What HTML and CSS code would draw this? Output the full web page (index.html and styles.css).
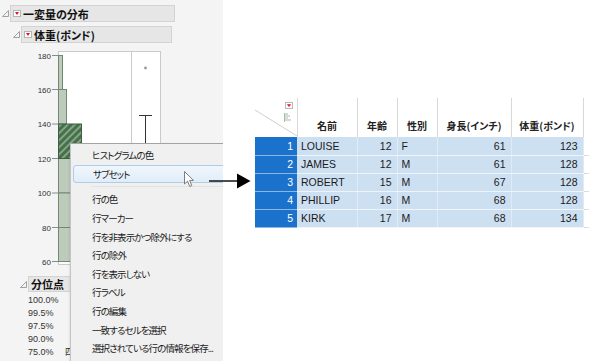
FILE: index.html
```html
<!DOCTYPE html>
<html lang="ja">
<head>
    <meta charset="UTF-8">
    <title>一変量の分布 - サブセット</title>
    <link rel="stylesheet" href="styles.css">
</head>
<body>

<div class="report">
    <div class="outline level1">
        <svg class="disclose" width="7" height="7" viewBox="0 0 7 7"><polygon points="6.5,0.5 6.5,6.5 0.5,6.5"/></svg>
        <div class="outline-title title-dist"><span class="hotspot"></span>一変量の分布</div>
    </div>
    <div class="outline level2">
        <svg class="disclose" width="7" height="7" viewBox="0 0 7 7"><polygon points="6.5,0.5 6.5,6.5 0.5,6.5"/></svg>
        <div class="outline-title title-var"><span class="hotspot"></span>体重(ポンド)</div>
    </div>

    <svg class="plot" width="223" height="231" viewBox="0 43 223 231">
        <defs>
            <pattern id="hatch" width="5" height="5" patternUnits="userSpaceOnUse" patternTransform="rotate(45)">
                <rect width="5" height="5" fill="#46704a"/>
                <rect width="2" height="5" fill="#85a486"/>
            </pattern>
        </defs>
        <rect x="58.5" y="51.5" width="102" height="213" fill="#fff" stroke="#cacaca"/>
        <line x1="131.5" y1="51.5" x2="131.5" y2="264.5" stroke="#cacaca"/>

        <g class="bars">
            <rect x="58.5" y="55.5" width="4" height="34"/>
            <rect x="58.5" y="89.5" width="8" height="34.5"/>
            <rect x="58.5" y="158.5" width="36" height="34.5"/>
            <rect x="58.5" y="193" width="30" height="34.5"/>
            <rect x="58.5" y="227.5" width="22" height="34"/>
        </g>
        <rect x="58.5" y="124" width="23" height="34.5" fill="url(#hatch)" stroke="#3d5f40"/>

        <g class="ticks">
            <line x1="52" y1="55.5" x2="58" y2="55.5"/>
            <line x1="52" y1="89.5" x2="58" y2="89.5"/>
            <line x1="52" y1="124" x2="58" y2="124"/>
            <line x1="52" y1="158.5" x2="58" y2="158.5"/>
            <line x1="52" y1="193" x2="58" y2="193"/>
            <line x1="52" y1="227.5" x2="58" y2="227.5"/>
            <line x1="52" y1="261.5" x2="58" y2="261.5"/>
        </g>
        <g class="axis-labels">
            <text x="51" y="58.5">180</text>
            <text x="51" y="92.5">160</text>
            <text x="51" y="127">140</text>
            <text x="51" y="161.5">120</text>
            <text x="51" y="196">100</text>
            <text x="51" y="230.5">80</text>
            <text x="51" y="264.5">60</text>
        </g>

        <circle cx="145.5" cy="68" r="1.4" fill="#9a9a9a"/>
        <line x1="139" y1="115.5" x2="152" y2="115.5" stroke="#333"/>
        <line x1="145.5" y1="115.5" x2="145.5" y2="170" stroke="#333"/>
    </svg>

    <div class="outline level-quant">
        <svg class="disclose" width="7" height="7" viewBox="0 0 7 7"><polygon points="6.5,0.5 6.5,6.5 0.5,6.5"/></svg>
        <div class="outline-title title-quant">分位点</div>
    </div>
    <div class="quantiles">
        <div class="q-row"><span class="q-pct">100.0%</span></div>
        <div class="q-row"><span class="q-pct">99.5%</span></div>
        <div class="q-row"><span class="q-pct">97.5%</span></div>
        <div class="q-row"><span class="q-pct">90.0%</span></div>
        <div class="q-row"><span class="q-pct">75.0%</span><span class="q-name">四分位点</span></div>
    </div>

    <div class="menu">
        <div class="menu-item">ヒストグラムの色</div>
        <div class="menu-item active">サブセット</div>
        <div class="menu-sep"></div>
        <div class="menu-item">行の色</div>
        <div class="menu-item">行マーカー</div>
        <div class="menu-item">行を非表示かつ除外にする</div>
        <div class="menu-item">行の除外</div>
        <div class="menu-item">行を表示しない</div>
        <div class="menu-item">行ラベル</div>
        <div class="menu-item">行の編集</div>
        <div class="menu-item">一致するセルを選択</div>
        <div class="menu-item">選択されている行の情報を保存...</div>
    </div>

    <svg class="cursor" width="11" height="17" viewBox="0 0 11 17">
        <polygon points="0.5,0.5 0.5,13 3.5,10.2 5.8,15.5 7.8,14.6 5.6,9.4 9.5,9.4" fill="#fff" stroke="#7d7d7d"/>
    </svg>
</div>

<svg class="pointer-arrow" width="42" height="16" viewBox="0 0 42 16">
    <line x1="0" y1="8" x2="29" y2="8" stroke="#000" stroke-width="1.4"/>
    <polygon points="28,0.5 41.5,8 28,15.5" fill="#000"/>
</svg>

<div class="table-area">
    <table class="data-grid">
        <colgroup>
            <col class="c-row">
            <col class="c-name">
            <col class="c-age">
            <col class="c-sex">
            <col class="c-height">
            <col class="c-weight">
            <col class="c-next">
        </colgroup>
        <thead>
            <tr>
                <th class="corner">
                    <svg width="42" height="38" viewBox="0 0 42 38">
                        <line x1="0" y1="12" x2="42" y2="38" stroke="#cfcfcf"/>
                        <rect x="30.5" y="4.5" width="7" height="6" fill="#fff" stroke="#b8b8b8"/>
                        <polygon points="31.8,6.3 36.2,6.3 34,9" fill="#e2142b"/>
                        <g stroke="#a7bba7">
                            <line x1="29.5" y1="15" x2="29.5" y2="24"/>
                            <line x1="30" y1="16" x2="33" y2="16"/>
                            <line x1="30" y1="18" x2="35" y2="18"/>
                            <line x1="30" y1="20" x2="33" y2="20"/>
                            <line x1="30" y1="22" x2="36" y2="22"/>
                        </g>
                    </svg>
                </th>
                <th>名前</th>
                <th>年齢</th>
                <th>性別</th>
                <th>身長(インチ)</th>
                <th>体重(ポンド)</th>
                <th class="next"></th>
            </tr>
        </thead>
        <tbody>
            <tr><td class="rownum">1</td><td class="txt">LOUISE</td><td class="num">12</td><td class="txt">F</td><td class="num">61</td><td class="num">123</td><td class="next"></td></tr>
            <tr><td class="rownum">2</td><td class="txt">JAMES</td><td class="num">12</td><td class="txt">M</td><td class="num">61</td><td class="num">128</td><td class="next"></td></tr>
            <tr><td class="rownum">3</td><td class="txt">ROBERT</td><td class="num">15</td><td class="txt">M</td><td class="num">67</td><td class="num">128</td><td class="next"></td></tr>
            <tr><td class="rownum">4</td><td class="txt">PHILLIP</td><td class="num">16</td><td class="txt">M</td><td class="num">68</td><td class="num">128</td><td class="next"></td></tr>
            <tr><td class="rownum">5</td><td class="txt">KIRK</td><td class="num">17</td><td class="txt">M</td><td class="num">68</td><td class="num">134</td><td class="next"></td></tr>
        </tbody>
    </table>
</div>

</body>
</html>
```

FILE: styles.css
```css
* {
    box-sizing: border-box;
}

body {
    margin: 0;
    width: 589px;
    height: 361px;
    overflow: hidden;
    position: relative;
    display: flex;
    align-items: flex-start;
    background-color: #fff;
    color: #222;
    font-family: "Noto Sans CJK JP", "Liberation Sans", sans-serif;
    font-feature-settings: "palt";
}

/* report window on the left */
.report {
    flex: none;
    position: relative;
    width: 223px;
    height: 361px;
    overflow: hidden;
    background-color: #f4f4f4;
}

.outline {
    display: flex;
    align-items: center;
}

.disclose {
    flex: none;
    display: block;
    margin-right: 1px;
}

.disclose polygon {
    fill: none;
    stroke: #a0a0a0;
}

.outline-title {
    display: flex;
    align-items: center;
    height: 17px;
    padding-left: 2px;
    background-color: #e6e6e6;
    border: 1px solid #d3d3d3;
    font-size: 11px;
    font-weight: 700;
    color: #111;
    white-space: nowrap;
}

.level1 {
    margin: 5px 0 0 2px;
}

.title-dist {
    width: 165px;
}

.level2 {
    margin: 4px 0 0 13px;
}

.title-var {
    width: 151px;
}

.hotspot {
    position: relative;
    display: inline-block;
    width: 8px;
    height: 7px;
    margin-right: 2px;
    background-color: #fff;
    border: 1px solid #b5b5b5;
}

.hotspot::after {
    content: "";
    position: absolute;
    left: 1px;
    top: 1px;
    border-left: 2px solid transparent;
    border-right: 2px solid transparent;
    border-top: 3px solid #e2142b;
}

.plot {
    display: block;
}

.bars rect {
    fill: #bccbbb;
    stroke: #71896f;
}

.ticks line {
    stroke: #8a8a8a;
}

.axis-labels text {
    font-family: "Liberation Sans", sans-serif;
    font-size: 8px;
    fill: #333;
    text-anchor: end;
}

.level-quant {
    margin: 2px 0 0 20px;
}

.title-quant {
    width: 70px;
    height: 16px;
}

.quantiles {
    margin-top: 2px;
    padding-left: 28px;
    font-family: "Liberation Sans", "Noto Sans CJK JP", sans-serif;
    font-size: 9px;
    line-height: 13px;
    color: #333;
}

.q-row {
    display: flex;
}

.q-pct {
    width: 37px;
}

/* context menu */
.menu {
    position: absolute;
    left: 70px;
    top: 143px;
    width: 170px;
    height: 230px;
    padding: 2px 0;
    background-color: #f0f0f0;
    border-top: 1px solid #a3a3a3;
    border-left: 1px solid #c4c4c4;
    box-shadow: -1px 1px 2px rgba(0, 0, 0, 0.08);
    font-size: 9.5px;
    color: #1a1a1a;
}

.menu-item {
    display: flex;
    align-items: center;
    height: 18.6px;
    padding-left: 21px;
    white-space: nowrap;
    letter-spacing: -0.9px;
}

.menu-item.active {
    margin-left: 2px;
    padding-left: 19px;
    border: 1px solid #aecde9;
    border-radius: 3px;
    background: linear-gradient(#f0f6fc, #e0edf9);
}

.menu-sep {
    height: 7px;
    margin-left: 20px;
    border-top: 3px solid transparent;
    border-bottom: 3px solid transparent;
    background-clip: padding-box;
    background-color: #e2e2e2;
}

.cursor {
    position: absolute;
    left: 184px;
    top: 171px;
}

.pointer-arrow {
    position: absolute;
    left: 209px;
    top: 173px;
}

/* data table */
.table-area {
    flex: none;
    margin: 98px 0 0 32px;
    width: 334px;
}

.data-grid {
    width: 334px;
    table-layout: fixed;
    border-collapse: collapse;
    font-family: "Liberation Sans", "Noto Sans CJK JP", sans-serif;
    font-size: 10.5px;
}

.c-row { width: 42px; }
.c-name { width: 60px; }
.c-age { width: 40px; }
.c-sex { width: 40px; }
.c-height { width: 74px; }
.c-weight { width: 72px; }
.c-next { width: 6px; }

.data-grid thead tr {
    height: 39px;
}

.data-grid th {
    padding: 0 0 5px;
    vertical-align: bottom;
    text-align: center;
    background-color: #fff;
    border-right: 1px solid #d8d8d8;
    font-family: "Noto Sans CJK JP", sans-serif;
    font-size: 10px;
    font-weight: 700;
    line-height: 12px;
    color: #222;
    white-space: nowrap;
}

.data-grid th.corner {
    padding: 0;
    vertical-align: top;
}

.corner svg {
    display: block;
}

.data-grid th.next {
    border-right: none;
}

.data-grid tbody tr {
    height: 18px;
}

.data-grid td {
    padding: 0 5px;
    background-color: #cde0f2;
    border-right: 1px solid #e1ebf5;
    border-bottom: 1px solid #eef4fa;
    line-height: 16px;
    color: #1a1a1a;
    white-space: nowrap;
}

.data-grid td.rownum {
    padding-right: 4px;
    text-align: right;
    background-color: #1a72cc;
    color: #fff;
    border-right: none;
    border-bottom: 1px solid #8fb5e0;
}

.data-grid td.txt {
    padding-left: 4px;
}

.data-grid td.num {
    text-align: right;
}

.data-grid td.next {
    padding: 0;
    background-color: #fff;
    border-right: none;
    border-bottom: 1px solid #dcdcdc;
}
```
